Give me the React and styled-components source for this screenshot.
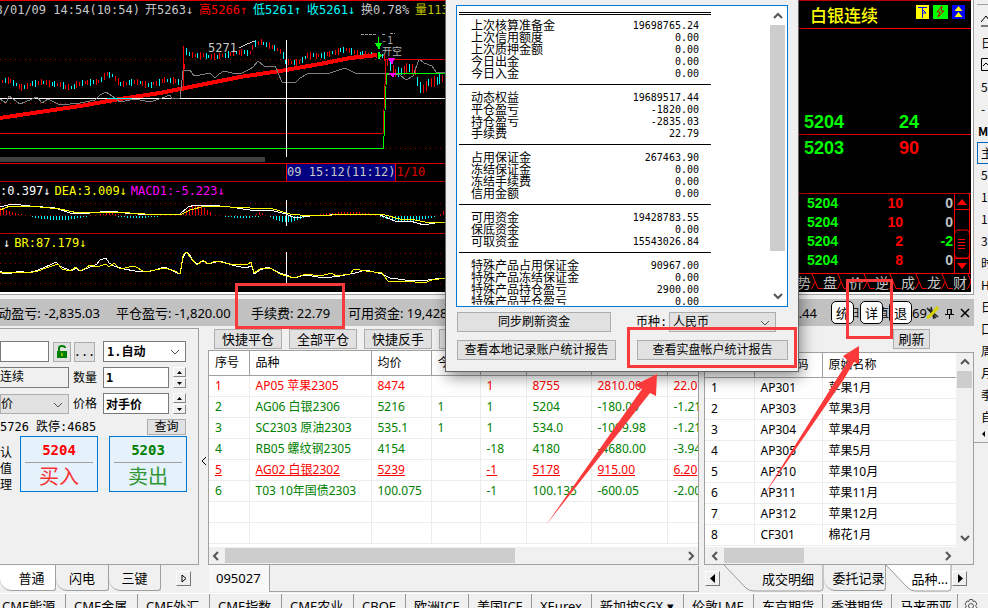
import React from "react";
import styled, { createGlobalStyle, css } from "styled-components";

const ui = '"Noto Sans", "Noto Sans CJK SC", sans-serif';
const song = '"DejaVu Sans Mono", "Noto Sans CJK SC", monospace';
const C = {
  face: "#f0f0f0", line: "#a0a0a0", btn: "#e1e1e1", mark: "#fa3a3a",
  up: "#ff0000", down: "#008000", lime: "#00ff00", cyan: "#00ffff",
};

const Global = createGlobalStyle`
  * { box-sizing: border-box; }
  html, body { margin: 0; height: 100%; overflow: hidden; }
  body { background: ${C.face}; color: #000; font: 12px/16px ${ui}; }
  button, input, select { font: inherit; color: inherit; margin: 0; padding: 0; border-radius: 0; }
  table { border-collapse: collapse; border-spacing: 0; font: inherit; color: inherit; }
  td, th { padding: 0; text-align: left; }
  th { font-weight: normal; }
  svg { display: block; flex: none; }
`;

const Page = styled.div`position: relative; height: 100vh; overflow: hidden; display: flex; flex-direction: column; white-space: nowrap;`;
const Main = styled.div`display: flex; flex: none;`;
const Content = styled.div`flex: 1; min-width: 0;`;
const Top = styled.div`display: flex; height: 295px; border-right: 1px solid ${C.line}; border-bottom: 1px solid ${C.line}; background: #fff; padding: 0 2px 2px 0;`;

/* Charts */
const Charts = styled.section`flex: 1; min-width: 0; background: #000; overflow: hidden; font: 12px/18px ${song};`;
const QuoteLine = styled.div`display: flex; height: 20px; border-top: 1px solid #e00000; color: #c8c8c8; overflow: hidden;`;
const Stamp = styled.span`width: 145px; padding-right: 5px; display: flex; justify-content: flex-end; overflow: hidden;`;
const Field = styled.span`width: 54px; color: ${(p) => p.$c};`;
const Pager = styled.div`width: 265px; height: 5px; background: #404040; margin-bottom: 1px;`;
const Axis = styled.div`display: flex; height: 18px; padding-left: 286px; border-top: 1px solid #e00000; color: #e00000; line-height: 17px;`;
const AxisTime = styled.span`background: #000080; color: #c8c8c8; border-left: 1px solid red; border-right: 1px solid red;`;
const Indicator = styled.div`height: ${(p) => p.$h}px; border-top: 1px solid #c00000; line-height: 18px; overflow: hidden;`;
const Legend = styled.div`display: flex; gap: 4px; height: 18px; padding-left: ${(p) => p.$l || 0}px;`;
const Ink = styled.span`color: ${(p) => p.$c};`;

const sample = (pts, x) => {
  for (let i = 1; i < pts.length; i++) {
    const [ax, ay] = pts[i - 1];
    const [bx, by] = pts[i];
    if (x <= bx) return ay + ((by - ay) * (x - ax)) / (bx - ax || 1);
  }
  return pts[pts.length - 1][1];
};
const path = (pts) => pts.map((p) => p.join(",")).join(" ");

const mids = [[0,82],[9,80],[20,88],[32,84],[42,82],[60,85],[70,88],[80,83],[98,82],[106,74],[113,76],[120,84],[135,82],[150,85],[165,80],[182,82],[185,51],[193,56],[200,55],[215,57],[240,52],[250,53],[254,44],[260,42],[275,48],[281,52],[285,62],[298,63],[307,55],[320,56],[335,52],[345,49],[352,52],[370,55],[383,56],[388,64],[394,73],[400,72],[408,68],[414,70],[418,84],[422,90],[428,83],[436,81],[446,76]];
const average = [[0,99],[6,103],[9,96],[20,104],[25,102],[37,97],[42,103],[48,99],[60,105],[80,103],[95,100],[100,95],[106,92],[112,96],[120,102],[135,99],[150,102],[162,98],[170,95],[172,99],[180,98],[183,71],[190,70],[194,76],[200,75],[210,73],[215,78],[219,74],[224,71],[232,73],[240,74],[250,69],[253,67],[258,61],[264,66],[275,66],[282,82],[295,83],[300,78],[307,74],[330,73],[345,68],[355,73],[385,74],[400,75],[406,80],[413,76],[419,59],[424,63],[432,66],[436,72],[446,73]];
const bars = Array.from({ length: 163 }, (_, i) => {
  const x = 2 + i * 2.75;
  const h = 3 + ((i * 7) % 5) + (x > 385 ? 4 : 0);
  return { x, y: sample(mids, x) - h / 2, h, c: (i * 5) % 7 < 4 ? "red" : C.cyan };
});
const trend = [[0,118],[40,112],[80,106],[120,99],[160,93],[200,85],[240,77],[280,71],[320,64],[350,58],[377,55]];

function Dots({ ys }) {
  return ys.map((y) => <line key={y} x1="0" x2="446" y1={y} y2={y} stroke="#a00000" strokeDasharray="1 4" />);
}

function PriceChart() {
  return (
    <svg width="446" height="137" viewBox="0 20 446 137" shapeRendering="crispEdges">
      <Dots ys={[59.5, 103.5, 148.5]} />
      {bars.map((b) => <rect key={b.x} x={b.x} y={b.y} width="1" height={b.h} fill={b.c} />)}
      <path d="M183.500 46v45" stroke="red" />
      <polyline points={path(trend)} fill="none" stroke="red" strokeWidth="4" />
      <path d="M0 98.500h446" stroke="#fff" />
      <polyline points={path(average)} fill="none" stroke="#808080" />
      <path d="M107 98.500h25" stroke={C.cyan} />
      <path d="M0 133.500H383L386 59.500H446" fill="none" stroke="#e00000" />
      <path d="M0 148.500H383.500L386.500 73.500H446" fill="none" stroke={C.lime} />
      <path d="M286.500 40v117" stroke="#fff" />
      <path d="M239 48l8-4 8-3" stroke="#ccc" fill="none" />
      <path d="M378.500 37v7" stroke={C.lime} />
      <path d="M375 43h7l-3 7zM378 52l4 3-4 4z" fill={C.lime} />
      <path d="M388 58h7l-3 7zM389 73h7l-3 5z" fill="#ff00ff" />
      <path d="M361 34h15M382 34h3M390 34l5-1" stroke="#999" strokeDasharray="3 1" />
      <text x="208" y="52" fill="#c8c8c8">5271</text>
      <text x="381" y="44" fill="#a0a0a0" fontSize="10">-1</text>
      <text x="382" y="55" fill="#b0b0b0" fontSize="10">开空</text>
    </svg>
  );
}

/* start, end, height, direction (1 below the axis, -1 above); the first one decays from its start */
const hist = [[0,22,7,-1,true],[32,88,4,1],[100,120,2,-1],[118,158,2,1],[165,183,1,-1],[183,212,10,-1],[225,260,2,1],[256,264,3,-1],[270,306,6,1],[320,378,3,-1],[380,436,5,1],[440,446,4,-1]];
const histBars = hist.flatMap(([from, to, peak, sign, decay]) => {
  const out = [];
  for (let x = from; x < to; x += 3) {
    const t = (x - from) / (to - from);
    out.push({ x, h: Math.max(1, Math.round(peak * (decay ? 1 - t : Math.sin(Math.PI * (t * 0.9 + 0.08))))), sign });
  }
  return out;
});
const difLine = [[0,207],[12,204],[30,206],[55,208],[70,213],[90,213],[110,211],[125,213],[150,215],[180,214],[188,207],[195,205],[210,205],[230,207],[250,210],[270,210],[286,214],[295,218],[310,216],[350,214],[380,215],[395,221],[410,221],[424,225],[435,223],[446,222]];
const deaLine = [[0,210],[10,206],[40,207],[60,209],[78,213],[105,212],[130,213],[160,215],[182,214],[190,210],[205,206],[230,207],[250,208],[270,208],[290,214],[310,216],[355,214],[385,215],[400,219],[415,220],[430,223],[446,222]];
const arLine = [[0,271],[4,274],[12,273],[20,271],[28,273],[38,270],[50,265],[56,262],[60,266],[64,268],[72,271],[76,268],[80,271],[88,268],[97,264],[100,260],[106,258],[109,263],[114,266],[124,269],[135,271],[148,272],[165,267],[175,272],[180,274],[183,258],[186,252],[190,255],[192,260],[197,264],[203,261],[208,264],[220,261],[232,265],[245,268],[252,266],[254,274],[260,270],[268,267],[280,273],[294,278],[305,275],[325,278],[340,276],[355,273],[366,270],[382,274],[390,278],[405,280],[422,281],[435,279],[446,278]];
const brLine = [[0,273],[4,272],[12,273],[20,272],[28,273],[38,271],[46,268],[58,264],[62,269],[70,271],[76,267],[80,271],[86,268],[90,265],[97,267],[106,264],[109,267],[114,263],[120,269],[134,266],[145,272],[165,268],[175,271],[180,274],[183,256],[186,251],[190,257],[197,265],[203,260],[208,264],[216,261],[230,264],[248,264],[251,262],[254,273],[260,269],[270,268],[280,274],[294,278],[306,274],[320,276],[332,273],[336,276],[350,274],[354,269],[366,271],[382,273],[388,281],[405,281],[424,283],[432,280],[446,278]];

/* Quotes */
const Quotes = styled.section`width: 174px; display: flex; flex-direction: column; background: #000; color: ${C.lime}; overflow: hidden; border-top: 1px solid #c00000; font: bold 14px/19px "Liberation Sans", "Noto Sans CJK SC", sans-serif;`;
const Title = styled.h1`margin: 0; height: 28px; padding-left: 13px; border-bottom: 1px solid red; color: #ff0; font: 500 17px/26px "Noto Sans CJK SC", sans-serif; display: flex; align-items: center;`;
const Badges = styled.span`display: flex; gap: 4px; margin: 0 6px 6px auto;`;
const Depth = styled.div`display: flex; align-items: flex-end; padding-left: 7px; height: ${(p) => p.$h}px; font-size: 18px; line-height: 24px; border-bottom: ${(p) => (p.$line ? "1px solid #e00000" : "0")};`;
const Price = styled.span`width: 95px;`;
const Ticks = styled.div`display: flex; border-top: 1px solid #c00000; border-bottom: 1px solid red; margin-top: auto; height: 81px; flex: none;`;
const TickTable = styled.table`width: 156px; height: 76px; table-layout: fixed; flex: none; td { height: 19px; text-align: right; } td:first-child { text-align: left; padding-left: 10px; }`;
const Num = styled.td`color: ${(p) => p.$c};`;
const QuoteTabs = styled.div`display: flex; height: 18px; flex: none; color: #c8c8c8;`;
const QuoteTab = styled.button`width: 26px; flex: none; border: 0; background: none; padding: 0; font: 14px/16px "Noto Sans CJK SC", sans-serif; display: flex;`;

/* Status */
const Status = styled.div`display: flex; align-items: center; height: 27px; margin-top: 4px; background: #c1c1c1; font-size: 13px; overflow: hidden;`;
const Stat = styled.span`width: ${(p) => p.$w}px; padding-right: ${(p) => p.$r || 0}px; flex: none; display: flex; justify-content: ${(p) => (p.$end ? "flex-end" : "flex-start")};`;
const StatusRight = styled.div`display: flex; align-items: center; margin-left: auto; padding-right: 4px;`;
const Round = styled.button`width: 23px; height: 23px; flex: none; background: #fff; border: 1px solid #000; border-radius: 5px; font: 13px/20px "Noto Sans CJK SC", sans-serif;`;
const Sliver = styled.span`width: 6px; overflow: hidden; font-size: 11px; direction: rtl;`;

/* Controls */
const Btn = styled.button`height: ${(p) => p.$h || 20}px; width: ${(p) => (p.$w ? p.$w + "px" : "auto")}; flex: none; display: inline-flex; align-items: center; justify-content: center; background: ${C.btn}; border: 1px solid #adadad; ${(p) => p.$song && css`font: 12px/14px ${song};`}`;
const Input = styled.input`height: 21px; width: ${(p) => p.$w}px; border: 1px solid #7a7a7a; background: #fff; padding: 0 2px; font: bold 12px/16px ${song}; flex: none;`;
const Drop = styled.span`position: relative; display: inline-flex; flex: none; width: ${(p) => p.$w}px; height: ${(p) => p.$h || 20}px; svg { position: absolute; right: 5px; top: 7px; pointer-events: none; }`;
const Select = styled.select`appearance: none; width: 100%; border: 1px solid ${(p) => (p.$gray ? "#adadad" : "#7a7a7a")}; background: ${(p) => (p.$gray ? C.btn : "#fff")}; padding: 0 ${(p) => p.$l ?? 3}px; font: ${(p) => (p.$bold ? "bold" : "normal")} 12px/16px ${song};`;

const Work = styled.div`display: flex; height: 239px;`;
const Order = styled.form`width: 199px; flex: none; margin-top: 2px; padding: 12px 10px 0 0; border: solid ${C.line}; border-width: 1px 1px 1px 0; font: 12px/16px ${song}; display: flex; flex-direction: column; gap: 5px;`;
const Line = styled.div`display: flex; align-items: center; height: ${(p) => p.$h || 21}px; padding-right: 2px;`;
const Gap = styled.span`width: ${(p) => p.$w}px; flex: none;`;
const Push = styled.span`flex: 1;`;
const Caption = styled.label`width: ${(p) => p.$w || 30}px; flex: none;`;
const Static = styled.output`width: 69px; height: 21px; flex: none; border: 1px solid #7a7a7a; border-left: 0; line-height: 18px;`;
const Spin = styled.span`display: flex; flex-direction: column; gap: 1px; width: 16px; margin-left: 4px; button { height: 10px; border: 1px solid; border-color: #fff #888 #888 #fff; background: ${C.face}; display: flex; align-items: center; justify-content: center; }`;
const Trade = styled.div`display: flex; height: 58px; margin-top: -3px;`;
const Notes = styled.div`width: 20px; padding: 9px 10px 0 0; line-height: 16px; white-space: normal;`;
const Deal = styled.button`width: 78px; height: 56px; margin-right: 11px; flex: none; border: 1px solid #0078d7; background: #e5f1fb; color: ${(p) => p.$c}; padding: 0 4px; strong { display: block; font: bold 14px/24px "DejaVu Sans Mono", monospace; border-bottom: 1px solid ${C.line}; } span { display: block; font: 20px/28px "Liberation Serif", "Noto Sans CJK SC", serif; opacity: 0.8; }`;

const Splitter = styled.button`width: 9px; flex: none; border: 0; background: none; padding: 30px 0 0 1px;`;
const Pane = styled.section`display: flex; flex-direction: column; min-width: 0; flex: ${(p) => (p.$w ? "none" : "1")}; width: ${(p) => (p.$w ? p.$w + "px" : "auto")}; margin-right: ${(p) => (p.$w ? 0 : 5)}px;`;
const Tools = styled.div`display: flex; gap: 7px; height: ${(p) => (p.$end ? 26 : 24)}px; padding: 3px ${(p) => (p.$end ? 44 : 6)}px 0 6px; font-size: 13px; overflow: hidden; justify-content: ${(p) => (p.$end ? "flex-end" : "flex-start")};`;
const Box = styled.div`flex: 1; min-height: 0; display: flex; flex-direction: column; border: 1px solid ${C.line}; background: ${C.face}; overflow: hidden;`;
const BoxBody = styled.div`display: flex; flex: 1; min-height: 0;`;
const Clip = styled.div`flex: 1; min-width: 0; background: #fff; overflow: hidden;`;
const Grid = styled.table`
  width: 100%; table-layout: fixed;
  th { height: 24px; border-bottom: 1px solid ${C.line}; border-right: 1px solid ${C.line}; font-size: 12px; }
  td { height: 21px; border-right: 1px solid #ececec; border-bottom: 1px solid #ececec; }
  th, td { padding-left: 6px; line-height: 16px; overflow: hidden; }
  th:last-child, td:last-child { border-right: 0; }
`;
const Row = styled.tr`color: ${(p) => p.$c}; text-decoration: ${(p) => (p.$u ? "underline" : "none")};`;
const HScroll = styled.div`display: flex; align-items: center; height: 17px; padding: 1px 3px; flex: none; gap: 2px;`;
const Thumb = styled.div`height: 15px; width: ${(p) => p.$w}px; background: #cdcdcd; margin-right: auto;`;
const VScroll = styled.div`width: 17px; flex: none; display: flex; flex-direction: column; align-items: center; justify-content: space-between; padding: 5px 0;`;
const VThumb = styled.div`width: 15px; height: ${(p) => p.$h}px; background: #cdcdcd; margin: 5px 0 auto;`;

/* Sheet tabs */
const TabsRow = styled.div`display: flex; height: 28px;`;
const TabGroup = styled.nav`display: flex; width: ${(p) => (p.$w ? p.$w + "px" : "auto")}; flex: ${(p) => (p.$w ? "none" : "1")}; font-size: 13px; align-items: flex-start;`;
const Tab = styled.button`height: 26px; width: ${(p) => p.$w}px; flex: none; border: solid ${C.line}; border-width: 0 1px 1px 0; border-radius: 0 0 3px 12px; background: ${(p) => (p.$on ? "#fff" : C.face)}; padding-left: ${(p) => p.$pad || 0}px; padding-right: 0; overflow: hidden;`;
const Arrow = styled.button`width: 15px; height: 15px; margin: 6px 0 0 ${(p) => p.$m || 0}px; border: 1px solid; border-color: #fff #777 #777 #fff; background: ${C.face}; display: flex; align-items: center; justify-content: center; flex: none;`;
const Account = styled.div`width: 61px; height: 27px; border-right: 1px solid ${C.line}; background: #f8f8f8; padding: 5px 0 0 7px; font-size: 13px;`;
const Rest = styled.div`flex: 1; height: 26px; margin: 1px 6px 0 0; border: solid ${C.line}; border-width: 0 1px 1px 0;`;
const Slant = styled.button`position: relative; height: 27px; width: ${(p) => p.$w}px; flex: none; border: 0; background: none; padding: 0 ${(p) => p.$r}px 0 0; text-align: right; svg { position: absolute; left: 0; top: 0; } span { position: relative; }`;

const Markets = styled.nav`display: flex; height: 30px; border-top: 1px solid #fff; font-size: 13px; flex: none;`;
const Market = styled.button`width: ${(p) => p.$w}px; height: 30px; flex: none; text-align: left; border: 0; border-right: 1px solid #999; background: none; padding: 0 0 6px 8px; overflow: hidden; &:first-child { padding-left: 2px; }`;
const GearBtn = styled.button`border: 0; background: none; padding: 0 0 6px 6px;`;

/* Side toolbar */
const Side = styled.aside`width: 14px; flex: none; overflow: hidden; height: 443px; padding: 4px 0 0 3px; border-bottom: 1px solid ${C.line};`;
const SideTop = styled.div`height: 6px; border-top: 1px solid ${C.line};`;
const SideItem = styled.button`display: flex; align-items: center; width: 28px; height: 22px; border: 1px solid ${(p) => (p.$on ? "#0067c0" : "transparent")}; background: none; padding: 0 0 0 ${(p) => (p.$b ? 0 : 3)}px; font: ${(p) => (p.$b ? "bold" : "normal")} 12px/20px "Noto Sans CJK SC", sans-serif; &:last-child { height: 12px; }`;

/* Report window */
const Dialog = styled.section`position: absolute; left: 445px; top: 0; width: 354px; height: 372px; background: ${C.face}; border: solid #666; border-width: 0 1px 1px; box-shadow: 2px 5px 14px rgba(0, 0, 0, 0.45); padding: 5px 10px; font: 12px/14px ${song}; display: flex; flex-direction: column;`;
const Report = styled.div`display: flex; height: 302px; width: 332px; border: 1px solid #0078d7; background: #fff; padding: 1px;`;
const Ledger = styled.div`flex: 1; overflow: hidden; padding-left: 1px;`;
const Lines = styled.table`width: 252px; td { height: 12px; line-height: 12px; font-size: 12px; padding-left: 12px; } td + td { text-align: right; font-size: 10px; padding: 0 12px 0 0; }`;
const Rule = styled.hr`width: 252px; margin: ${(p) => (p.$double ? 5 : 4)}px 0 ${(p) => (p.$double ? 5 : 7)}px; border: 0; border-top: 1px solid #000; height: ${(p) => (p.$double ? 3 : 0)}px; border-bottom: ${(p) => (p.$double ? "1px solid #000" : "0")};`;
const DialogRow = styled.div`display: flex; align-items: center; height: 20px; margin-top: ${(p) => p.$t}px; padding-left: 1px;`;

/* Markers */
const Frame = styled.div`position: absolute; left: ${(p) => p.$x}px; top: ${(p) => p.$y}px; width: ${(p) => p.$w}px; height: ${(p) => p.$h}px; border: 3px solid ${C.mark}; pointer-events: none;`;
const Pointers = styled.svg`position: absolute; left: 0; top: 0; pointer-events: none;`;

const chev = { left: "M6 2L2 6l4 4", right: "M2 2l4 4-4 4", up: "M2 6l4-4 4 4", down: "M2 2l4 4 4-4" };
function Chevron({ dir, color = "#555", thin }) {
  const flat = dir === "up" || dir === "down";
  return <svg width={flat ? 12 : 8} height={flat ? 8 : 12}><path d={chev[dir]} fill="none" stroke={color} strokeWidth={thin ? 1 : 2} /></svg>;
}
const Tri = ({ d, hollow }) => <svg width="8" height="9"><path d={d} fill={hollow ? "none" : "#000"} stroke={hollow ? "#000" : "none"} /></svg>;
function Spinner({ name }) {
  return (
    <Spin>
      <button type="button" aria-label={name + " +"}><svg width="5" height="3"><path d="M0 3h5L2.500 0z" /></svg></button>
      <button type="button" aria-label={name + " -"}><svg width="5" height="3"><path d="M0 0h5L2.500 3z" /></svg></button>
    </Spin>
  );
}

const groups = [
  [["上次核算准备金", "19698765.24"], ["上次信用额度", "0.00"], ["上次质押金额", "0.00"], ["今日出金", "0.00"], ["今日入金", "0.00"]],
  [["动态权益", "19689517.44"], ["平仓盈亏", "-1820.00"], ["持仓盈亏", "-2835.03"], ["手续费", "22.79"]],
  [["占用保证金", "267463.90"], ["冻结保证金", "0.00"], ["冻结手续费", "0.00"], ["信用金额", "0.00"]],
  [["可用资金", "19428783.55"], ["保底资金", "0.00"], ["可取资金", "15543026.84"]],
  [["特殊产品占用保证金", "90967.00"], ["特殊产品冻结保证金", "0.00"], ["特殊产品持仓盈亏", "2900.00"], ["特殊产品平仓盈亏", "0.00"]],
];
const positions = [
  ["1", "AP05 苹果2305", "8474", "", "1", "8755", "2810.00", "22.07"],
  ["2", "AG06 白银2306", "5216", "1", "1", "5204", "-180.00", "-1.21"],
  ["3", "SC2303 原油2303", "535.1", "1", "1", "534.0", "-1099.98", "-1.21"],
  ["4", "RB05 螺纹钢2305", "4154", "", "-18", "4180", "-4680.00", "-3.94"],
  ["5", "AG02 白银2302", "5239", "", "-1", "5178", "915.00", "6.20"],
  ["6", "T03 10年国债2303", "100.075", "", "-1", "100.135", "-600.05", "-2.00"],
  ["", "", "", "", "", "", "", ""],
  ["", "", "", "", "", "", "", ""],
];
const products = [["AP301", "苹果1月"], ["AP303", "苹果3月"], ["AP304", "苹果4月"], ["AP305", "苹果5月"], ["AP310", "苹果10月"], ["AP311", "苹果11月"], ["AP312", "苹果12月"], ["CF301", "棉花1月"]];
const markets = [["CME能源", 66], ["CME金属", 72], ["CME外汇", 72], ["CME指数", 72], ["CME农业", 72], ["CBOE", 52], ["欧洲ICE", 63], ["美国ICE", 63], ["XEurex", 60], ["新加坡SGX ▾", 92], ["伦敦LME", 70], ["东京期货", 69], ["香港期货", 69], ["马来西亚", 66]];

function QuotePanel() {
  return (
    <Quotes>
      <Title>白银连续
        <Badges>
          <svg width="13" height="14"><path d="M0 0h13v14H0z" fill="#ff0" /><path d="M2 2.500h9M6.500 3v10M7 5l3 3H7" fill="none" stroke="#00f" /></svg>
          <svg width="15" height="14"><path d="M0 0h15v14H0z" fill={C.lime} /><path d="M9 1L4 7h3l-2 5 6-6H8z" fill="none" stroke="#c00000" /></svg>
          <svg width="13" height="14"><path d="M0 0h13v14H0z" fill="#00f" /><path d="M6.500 1l4 5h-8zM6.500 7l4 5h-8z" fill="#ff0" /></svg>
        </Badges>
      </Title>
      <Depth $h={106} $line><Price>5204</Price><span>24</span></Depth>
      <Depth $h={25}><Price>5203</Price><Ink $c="red">90</Ink></Depth>
      <Ticks>
        <TickTable>
          <colgroup><col /><col width="55" /><col width="50" /></colgroup>
          <tbody>
            {["10", "10", "2", "8"].map((v, i) => (
              <tr key={i}><td>5204</td><Num $c="red">{v}</Num><Num $c={i === 2 ? C.lime : "#c0c0c0"}>{i === 2 ? "-2" : "0"}</Num></tr>
            ))}
          </tbody>
        </TickTable>
        <svg width="17" height="80" viewBox="0 0 17 80" fill="none" stroke="red">
          <path d="M1.500 0v80M16.500 0v80M1.500 15.500h15M1.500 64.500h15" />
          <path d="M4 11l5-6 5 6zM4 69l5 6 5-6z" fill="red" stroke="none" />
          <path d="M1.500 41q0-5 4-5h7q4 0 4 5v18q0 5-4 5h-7q-4 0-4-5zM5 45.500h7M5 48.500h7M5 51.500h7M5 54.500h7" />
        </svg>
      </Ticks>
      <QuoteTabs>
        {["势", "盘", "价", "逆", "成", "龙", "财"].map((t) => (
          <QuoteTab key={t} type="button">
            <span>{t}</span>
            <svg width="12" height="16"><path d="M0 14.500h1M1 0l6 14.500h5M1 14L4 8" stroke="red" fill="none" /></svg>
          </QuoteTab>
        ))}
      </QuoteTabs>
    </Quotes>
  );
}

function OrderForm() {
  return (
    <Order onSubmit={(e) => e.preventDefault()}>
      <Line>
        <Input $w={49} aria-label="合约" />
        <Gap $w={4} />
        <Btn type="button" $w={18} aria-label="锁定">
          <svg width="12" height="14"><path d="M1 6h10v7H1z" fill="green" /><path d="M3 6V3q0-2 3-2t3 2" fill="none" stroke="green" strokeWidth="2" /><path d="M6 8v3" stroke="#ff0" /></svg>
        </Btn>
        <Gap $w={3} />
        <Btn type="button" $w={21} $song>...</Btn>
        <Gap $w={8} />
        <Drop $w={83} $h={21}><Select $bold aria-label="模式" defaultValue="1"><option value="1">1.自动</option></Select><Chevron dir="down" thin /></Drop>
      </Line>
      <Line>
        <Static>连续</Static><Gap $w={4} />
        <Caption htmlFor="qty">数量</Caption>
        <Input id="qty" $w={66} defaultValue="1" />
        <Spinner name="数量" />
      </Line>
      <Line>
        <Drop $w={69}><Select $gray $l={0} aria-label="价格类型"><option>价</option></Select><Chevron dir="down" thin /></Drop><Gap $w={4} />
        <Caption htmlFor="price">价格</Caption>
        <Input id="price" $w={66} defaultValue="对手价" />
        <Spinner name="价格" />
      </Line>
      <Line $h={15}>
        <span>5726 跌停:4685</span>
        <Push />
        <Btn type="button" $w={39} $h={16} $song>查询</Btn>
      </Line>
      <Trade>
        <Notes>认值理</Notes>
        <Deal type="button" $c="red"><strong>5204</strong><span>买入</span></Deal>
        <Deal type="button" $c="green"><strong>5203</strong><span>卖出</span></Deal>
      </Trade>
    </Order>
  );
}

function SlantTab({ w, r, on, children }) {
  return (
    <Slant type="button" $w={w} $r={r}>
      <svg width={w} height="27"><path d={`M0 0L22 23q3 3 8 3H${w - 4}q3 0 3-3V0`} fill={on ? "#fff" : C.face} stroke="#999" /></svg>
      <span>{children}</span>
    </Slant>
  );
}

const side = [
  <svg width="14" height="16"><path d="M0 9l5-6 3 4 5-4M0 13h14" fill="none" stroke="#000" /></svg>, "日",
  <svg width="14" height="14"><path d="M.500.500h13v12H.500zM2 8l3-3 3 3 3-2" fill="none" stroke="#000" /></svg>, "5", "-", "M", "主", "5", "10", "1", "3时", "时", "H", "日", "口", "周", "月", "季", "自",
  <svg width="6" height="8"><path d="M4 1v6L1 4z" /></svg>,
];

export default function App() {
  return (
    <Page>
      <Global />
      <Main>
        <Content>
          <Top>
            <Charts>
              <QuoteLine>
                <Stamp>8/01/09 14:54(10:54)</Stamp>
                {[["开5263↓", "#c8c8c8"], ["高5266↑", "red"], ["低5261↑", C.cyan], ["收5261↓", C.cyan], ["换0.78%", "#c8c8c8"], ["量1133", "#c8c800"]].map(([t, c]) => <Field key={t} $c={c}>{t}</Field>)}
              </QuoteLine>
              <PriceChart />
              <Pager />
              <Axis><AxisTime>09 15:12(11:12)</AxisTime>1/10</Axis>
              <Indicator $h={52}>
                <Legend><Ink $c="#fff">:0.397↓</Ink><Ink $c="#ff0">DEA:3.009↓</Ink><Ink $c="#f0f">MACD1:-5.223↓</Ink></Legend>
                <svg width="446" height="33" viewBox="0 200 446 33" shapeRendering="crispEdges">
                  <Dots ys={[203.5, 215.5]} />
                  {histBars.map((b, i) => <rect key={i} x={b.x} y={b.sign < 0 ? 215 - b.h : 216} width="1" height={b.h} fill={b.sign < 0 ? "red" : C.cyan} />)}
                  <polyline points={path(difLine)} fill="none" stroke="#fff" />
                  <polyline points={path(deaLine)} fill="none" stroke="#ff0" />
                  <path d="M286.500 200v26" stroke="#fff" />
                </svg>
              </Indicator>
              <Indicator $h={60}>
                <Legend $l={3}><Ink $c="#fff">↓</Ink><Ink $c="#ff0">BR:87.179↓</Ink></Legend>
                <svg width="446" height="40" viewBox="0 252 446 40" shapeRendering="crispEdges">
                  <Dots ys={[253.5, 263.5, 273.5, 283.5]} />
                  <polyline points={path(arLine)} fill="none" stroke="#fff" />
                  <polyline points={path(brLine)} fill="none" stroke="#ff0" />
                  <path d="M286.500 250v33" stroke="#fff" />
                </svg>
              </Indicator>
            </Charts>
            <QuotePanel />
          </Top>
          <Status>
            <Stat $w={116} $r={16} $end>动盈亏: -2,835.03</Stat>
            <Stat $w={135}>平仓盈亏: -1,820.00</Stat>
            <Stat $w={97}>手续费: 22.79</Stat>
            <Stat $w={140}>可用资金: 19,428</Stat>
            <StatusRight>
              <span>.44</span><Gap $w={14} />
              <Round type="button">统</Round><Sliver>日</Sliver>
              <Round type="button">详</Round><Sliver>直</Sliver>
              <Round type="button">退</Round>
              <Stat $w={14}>69</Stat>
              <svg width="13" height="14"><path d="M1 2l9 10M5 1l3 12M12 11L3 3" stroke="#222" strokeWidth="1.500" /><path d="M1 12l5-4 6-7" fill="none" stroke="#d8d000" strokeWidth="3" /></svg>
              <Gap $w={5} />
              <svg width="11" height="12"><path d="M3.500 7V2.500h4V7M7 2v5M1 7.500h9M5.500 8v4" stroke="#000" fill="none" /></svg>
              <Gap $w={5} />
              <svg width="10" height="10"><path d="M1 1l8 8M9 1L1 9" stroke="#000" strokeWidth="1.500" /></svg>
            </StatusRight>
          </Status>
          <Work>
            <OrderForm />
            <Splitter type="button" aria-label="收起"><Chevron dir="left" color="#000" thin /></Splitter>
            <Pane>
              <Tools>
                {["快捷平仓", "全部平仓", "快捷反手", "快捷锁仓"].map((t) => <Btn key={t} type="button" $w={68}>{t}</Btn>)}
              </Tools>
              <Box>
                <BoxBody>
                  <Clip>
                    <Grid>
                      <colgroup>{[40, 122, 60, 49, 46, 65, 76].map((w, i) => <col key={i} width={w} />)}<col /></colgroup>
                      <thead><tr>{["序号", "品种", "均价", "今仓", "总仓", "现价", "盈亏", "比例"].map((t) => <th key={t}>{t}</th>)}</tr></thead>
                      <tbody>{positions.map((r, i) => <Row key={i} $c={i === 0 || i === 4 ? C.up : C.down} $u={i === 4}>{r.map((v, j) => <td key={j}>{v}</td>)}</Row>)}</tbody>
                    </Grid>
                  </Clip>
                </BoxBody>
                <HScroll><Chevron dir="left" /><Gap $w={1} /><Thumb $w={290} /><Chevron dir="right" /></HScroll>
              </Box>
            </Pane>
            <Pane $w={270}>
              <Tools $end><Btn type="button" $w={37}>刷新</Btn></Tools>
              <Box>
                <BoxBody>
                  <Clip>
                    <Grid>
                      <colgroup><col width="49" /><col width="68" /><col /></colgroup>
                      <thead><tr><th>序号</th><th>品种代码</th><th>原始名称</th></tr></thead>
                      <tbody>{products.map(([code, name], i) => <tr key={code}><td>{i + 1}</td><td>{code}</td><td>{name}</td></tr>)}</tbody>
                    </Grid>
                  </Clip>
                  <VScroll><Chevron dir="up" /><VThumb $h={17} /><Chevron dir="down" /></VScroll>
                </BoxBody>
                <HScroll><Gap $w={1} /><Chevron dir="left" /><Gap $w={1} /><Thumb $w={80} /><Chevron dir="right" /><Gap $w={16} /></HScroll>
              </Box>
            </Pane>
          </Work>
          <TabsRow>
            <TabGroup $w={209}>
              <Tab type="button" $w={56} $pad={8} $on>普通</Tab><Tab type="button" $w={53}>闪电</Tab><Tab type="button" $w={52}>三键</Tab>
              <Arrow type="button" aria-label="更多" $m={15}><Tri d="M2 1v7l4-3.500z" hollow /></Arrow>
            </TabGroup>
            <TabGroup><Account>095027</Account><Rest /></TabGroup>
            <TabGroup $w={269}>
              <Arrow type="button" aria-label="向左"><Tri d="M6 0v9L1 4.500z" /></Arrow><Gap $w={4} />
              <SlantTab w={100} r={10}>成交明细</SlantTab>
              <Tab type="button" $w={62} $pad={8}>委托记录</Tab>
              <SlantTab w={66} r={4} on>品种...</SlantTab>
              <Arrow type="button" aria-label="向右"><Tri d="M2 0v9l5-4.500z" /></Arrow>
            </TabGroup>
          </TabsRow>
        </Content>
        <Side><SideTop />{side.map((s, i) => <SideItem key={i} type="button" $on={s === "主"} $b={s === "M"}>{s}</SideItem>)}</Side>
      </Main>
      <Markets>
        {markets.map(([t, w]) => <Market key={t} type="button" $w={w}>{t}</Market>)}
        <GearBtn type="button" aria-label="设置"><svg width="14" height="14" fill="none" stroke="#555"><circle cx="7" cy="7" r="2.500" /><path d="M5.500.500h3l.5 2 2-.5 2 3-1.500 1.500L13 9l-2 3-2-.5-.5 2h-3l-.5-2-2 .5L1 9l1.500-2L1 5l2-3 2 .5z" /></svg></GearBtn>
      </Markets>

      <Dialog role="dialog" aria-label="资金">
        <Report>
          <Ledger>
            {groups.map((g, i) => (
              <React.Fragment key={i}>
                <Rule $double={i === 0} />
                <Lines><tbody>{g.map(([k, v]) => <tr key={k}><td>{k}</td><td>{v}</td></tr>)}</tbody></Lines>
              </React.Fragment>
            ))}
          </Ledger>
          <VScroll><Chevron dir="up" /><VThumb $h={226} /><Chevron dir="down" /></VScroll>
        </Report>
        <DialogRow $t={5}>
          <Btn type="button" $w={154} $song>同步刷新资金</Btn><Gap $w={25} />
          <Caption htmlFor="cur" $w={33}>币种:</Caption>
          <Drop $w={107}><Select id="cur" $gray><option>人民币</option></Select><Chevron dir="down" thin /></Drop>
        </DialogRow>
        <DialogRow $t={8}>
          <Btn type="button" $w={159} $song>查看本地记录账户统计报告</Btn><Gap $w={21} />
          <Btn type="button" $w={151} $song>查看实盘帐户统计报告</Btn>
        </DialogRow>
      </Dialog>

      <Frame $x={235} $y={283} $w={110} $h={46} />
      <Frame $x={627} $y={327} $w={170} $h={41} />
      <Frame $x={846} $y={279} $w={47} $h={60} />
      <Pointers width="988" height="608" fill={C.mark}>
        <path d="M546 525L642 389l-7-4 22-11-1 22-6-3z" />
        <path d="M762 498L848 361l-5-5 16-10v18l-5-2-10 17z" />
      </Pointers>
    </Page>
  );
}
